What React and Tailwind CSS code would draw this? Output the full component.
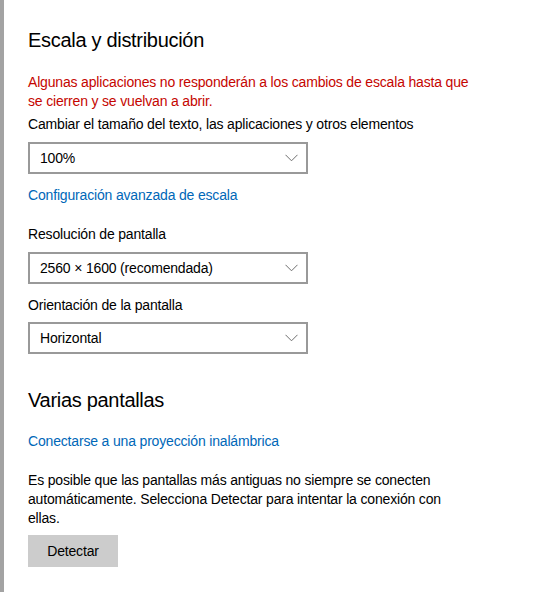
import React from 'react';

const font = { fontFamily: '"Liberation Sans", Arial, sans-serif' };

const Chevron = () => (
  <svg width="13" height="8" viewBox="0 0 13 8" className="shrink-0">
    <path d="M0.5 0.8 L6.5 6.8 L12.5 0.8" fill="none" stroke="#6e6e6e" strokeWidth="1" />
  </svg>
);

const Dropdown = ({ value, className = '' }) => (
  <div className={`flex h-[32px] w-[280px] items-center justify-between border-2 border-[#999999] bg-white pl-[10px] pr-[8px] text-[14px] leading-[19px] text-black ${className}`}>
    <span>{value}</span>
    <Chevron />
  </div>
);

export default function App() {
  return (
    <div className="flex h-[592px] w-[539px] overflow-hidden bg-white" style={font}>
      <div className="h-full w-[4px] shrink-0 bg-[#a3a3a3]" />
      <div className="flex flex-col pl-[24px] pt-[26px] text-[14px] leading-[19px] tracking-[-0.17px] text-black">
        <h1 className="text-[20px] leading-[28px] font-normal tracking-[-0.3px]">Escala y distribución</h1>

        <p className="mt-[19px] text-[#c50500]">
          Algunas aplicaciones no responderán a los cambios de escala hasta que
          <br />
          se cierren y se vuelvan a abrir.
        </p>

        <p className="mt-[4px]">Cambiar el tamaño del texto, las aplicaciones y otros elementos</p>
        <Dropdown value="100%" className="mt-[8px]" />

        <a className="mt-[12px] text-[#0067b8]">Configuración avanzada de escala</a>

        <p className="mt-[20px]">Resolución de pantalla</p>
        <Dropdown value="2560 × 1600 (recomendada)" className="mt-[8px]" />

        <p className="mt-[12px]">Orientación de la pantalla</p>
        <Dropdown value="Horizontal" className="mt-[7px]" />

        <h2 className="mt-[32px] text-[20px] leading-[28px] font-normal tracking-[-0.3px]">Varias pantallas</h2>

        <a className="mt-[18px] text-[#0067b8]">Conectarse a una proyección inalámbrica</a>

        <p className="mt-[20px]">
          Es posible que las pantallas más antiguas no siempre se conecten
          <br />
          automáticamente. Selecciona Detectar para intentar la conexión con
          <br />
          ellas.
        </p>

        <button className="mt-[7px] h-[32px] w-[90px] bg-[#cccccc] text-[14px] tracking-[-0.17px] text-black">
          Detectar
        </button>
      </div>
    </div>
  );
}
